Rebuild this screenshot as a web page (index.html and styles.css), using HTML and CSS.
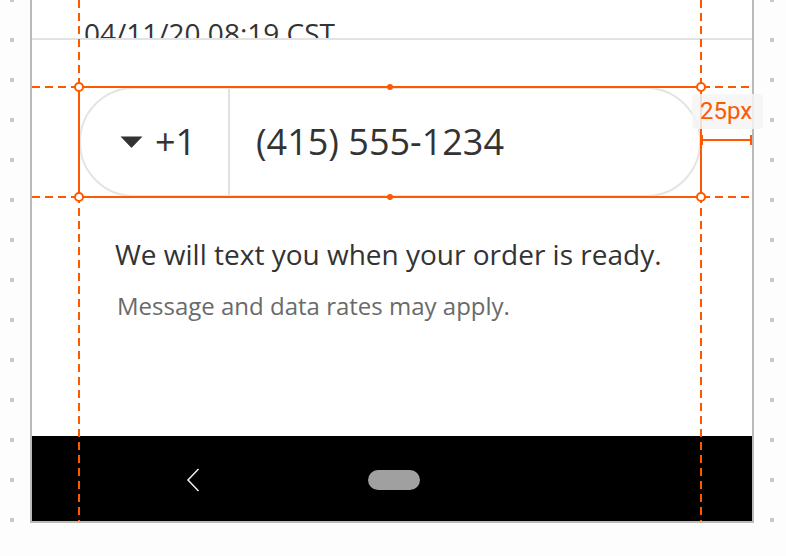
FILE: index.html
```html
<!DOCTYPE html>
<html lang="en">
<head>
<meta charset="utf-8">
<title>Phone field spec</title>
<link rel="stylesheet" href="styles.css">
</head>
<body>
<div class="stage">
  <div class="gutter gutter-left"></div>
  <div class="phone">
    <div class="header"><span class="stamp">04/11/20 08:19 CST</span></div>
    <div class="content">
      <div class="phone-field">
        <div class="country">
          <svg class="caret" width="23" height="12" viewBox="0 0 23 12"><path d="M0.5 0.5 L22.5 0.5 L12.2 11.3 Q11.5 12 10.8 11.3 Z" fill="#333"/></svg>
          <span class="code">+1</span>
        </div>
        <div class="number">(415) 555-1234</div>
      </div>
      <p class="note">We will text you when your order is ready.</p>
      <p class="fine">Message and data rates may apply.</p>
    </div>
    <div class="navbar">
      <svg class="back" width="14" height="24" viewBox="0 0 14 24"><path d="M12.5 1 L2 12 L12.5 23" fill="none" stroke="#e6e6e6" stroke-width="1.6"/></svg>
      <span class="home"></span>
    </div>
  </div>
  <div class="gutter gutter-right"></div>
</div>

<div class="marks">
  <span class="dash-v dash-v-left"></span>
  <span class="dash-v dash-v-right"></span>
  <span class="dash-h dash-h-tl"></span>
  <span class="dash-h dash-h-tr"></span>
  <span class="dash-h dash-h-bl"></span>
  <span class="dash-h dash-h-br"></span>
  <span class="sel"></span>
  <span class="knob knob-tl"></span>
  <span class="knob knob-tr"></span>
  <span class="knob knob-bl"></span>
  <span class="knob knob-br"></span>
  <span class="mid mid-t"></span>
  <span class="mid mid-b"></span>
  <span class="label">25px</span>
  <span class="measure"></span>
  <span class="tick tick-l"></span>
  <span class="tick tick-r"></span>
</div>
</body>
</html>
```
FILE: styles.css
```css
* { box-sizing: border-box; }
html, body { margin: 0; padding: 0; }
body {
  width: 786px;
  height: 556px;
  overflow: hidden;
  background: #fdfdfd;
  font-family: "Open Sans", "Noto Sans", sans-serif;
  color: #333;
  position: relative;
}
.stage {
  display: flex;
  align-items: flex-start;
  height: 556px;
}
.gutter {
  height: 556px;
}
.gutter-left {
  width: 30px;
  background-image: linear-gradient(to bottom, #c9c9c9 4px, transparent 4px);
  background-size: 4px 40px;
  background-position: 10px -2px;
  background-repeat: repeat-y;
}
.gutter-right {
  width: 32px;
  background-image: linear-gradient(to bottom, #c9c9c9 4px, transparent 4px);
  background-size: 4px 40px;
  background-position: 16px -2px;
  background-repeat: repeat-y;
}
.phone {
  width: 724px;
  height: 523px;
  border: 2px solid #bdb9b9;
  border-top: 0;
  background: #fff;
  display: flex;
  flex-direction: column;
}
.header {
  height: 40px;
  border-bottom: 2px solid #e2e2e2;
  overflow: hidden;
  padding: 14px 0 0 52px;
  flex: none;
}
.stamp {
  display: block;
  font-size: 28px;
  line-height: 38px;
  white-space: nowrap;
  color: #333;
}
.content {
  padding: 47px 0 0 47px;
  flex: 1;
}
.phone-field {
  width: 622px;
  height: 110px;
  border: 2px solid #e4e4e4;
  border-radius: 55px;
  display: flex;
  align-items: stretch;
}
.country {
  width: 149px;
  border-right: 2px solid #e0e0e0;
  display: flex;
  align-items: center;
  justify-content: center;
  gap: 12px;
  padding-left: 7px;
}
.caret { display: block; }
.code, .number {
  font-size: 36px;
  line-height: 1;
  color: #333;
}
.number {
  display: flex;
  align-items: center;
  padding-left: 26px;
}
.note {
  margin: 38px 0 0 36px;
  font-size: 28px;
  color: #333;
}
.fine {
  margin: 16px 0 0 38px;
  font-size: 24px;
  color: #6a6a6a;
}
.navbar {
  height: 85px;
  flex: none;
  background: #000;
  display: flex;
  align-items: center;
  padding: 3px 0 0 154px;
}
.back { display: block; }
.home {
  display: block;
  width: 52px;
  height: 20px;
  border-radius: 10px;
  background: #a0a0a0;
  margin-left: 168px;
}

/* design annotations laid over the mockup */
.marks {
  position: absolute;
  left: 0;
  top: 0;
  width: 786px;
  height: 556px;
  pointer-events: none;
}
.marks span { position: absolute; display: block; }
.dash-v {
  top: 0;
  width: 2px;
  height: 521px;
  background: repeating-linear-gradient(to bottom, #fd5900 0 8px, transparent 8px 13px);
}
.dash-v-left { left: 78px; }
.dash-v-right { left: 700px; }
.dash-h {
  height: 2px;
  background: repeating-linear-gradient(to right, #fd5900 0 8px, transparent 8px 13px);
}
.dash-h-tl { left: 32px; width: 46px; top: 86px; }
.dash-h-bl { left: 32px; width: 46px; top: 196px; }
.dash-h-tr { left: 702px; width: 50px; top: 86px; }
.dash-h-br { left: 702px; width: 50px; top: 196px; }
.sel {
  left: 78px;
  top: 86px;
  width: 624px;
  height: 112px;
  border: 2px solid #fd5900;
}
.knob {
  width: 10px;
  height: 10px;
  border-radius: 50%;
  border: 2px solid #fd5900;
  background: #fff;
}
.knob-tl { left: 74px; top: 82px; }
.knob-tr { left: 696px; top: 82px; }
.knob-bl { left: 74px; top: 192px; }
.knob-br { left: 696px; top: 192px; }
.mid {
  width: 6px;
  height: 6px;
  border-radius: 50%;
  background: #fd5900;
}
.mid-t { left: 387px; top: 84px; }
.mid-b { left: 387px; top: 194px; }
.label {
  left: 692px;
  top: 94px;
  width: 71px;
  height: 35px;
  border-radius: 4px;
  background: rgba(244, 244, 244, 0.85);
  color: #fd5900;
  font-family: Roboto, "Liberation Sans", sans-serif;
  font-size: 24px;
  line-height: 35px;
  padding-left: 8px;
}
.measure {
  left: 701px;
  top: 139px;
  width: 51px;
  height: 2px;
  background: #fd5900;
}
.tick {
  top: 135px;
  width: 2px;
  height: 10px;
  background: #fd5900;
}
.tick-l { left: 701px; }
.tick-r { left: 750px; }
```
